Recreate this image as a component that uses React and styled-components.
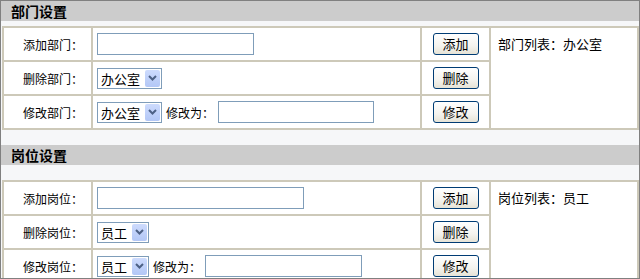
import React from "react"
import styled, { createGlobalStyle } from "styled-components"

const GlobalStyle = createGlobalStyle`
  html, body {
    margin: 0;
    padding: 0;
    background: #fff;
  }
  body {
    font-family: "Noto Sans CJK SC", "Liberation Sans", sans-serif;
    font-size: 12px;
    color: #000;
  }
`

const sections = [
  {
    title: "部门设置",
    noun: "部门",
    options: "办公室",
    list: "部门列表：办公室",
    gap: 5,
    addWidth: 157,
    selectWidth: 65,
    editWidth: 156,
  },
  {
    title: "岗位设置",
    noun: "岗位",
    options: "员工",
    list: "岗位列表：员工",
    gap: 15,
    addWidth: 207,
    selectWidth: 52,
    editWidth: 157,
  },
]

const Chevron = () => (
  <svg width="9" height="6" viewBox="0 0 9 6">
    <path d="M1 1 L4.5 4.5 L8 1" stroke="#4d6185" strokeWidth="2" fill="none" />
  </svg>
)

const Section = ({ s, first }) => (
  <>
    <Header first={first}>{s.title}</Header>
    <Grid top={s.gap}>
      <LabelCell>添加{s.noun}：</LabelCell>
      <FieldCell>
        <TextInput w={s.addWidth} />
      </FieldCell>
      <ButtonCell>
        <Button>添加</Button>
      </ButtonCell>

      <LabelCell>删除{s.noun}：</LabelCell>
      <FieldCell>
        <Select w={s.selectWidth}>
          <span>{s.options}</span>
          <Arrow>
            <Chevron />
          </Arrow>
        </Select>
      </FieldCell>
      <ButtonCell>
        <Button>删除</Button>
      </ButtonCell>

      <LabelCell>修改{s.noun}：</LabelCell>
      <FieldCell>
        <Select w={s.selectWidth}>
          <span>{s.options}</span>
          <Arrow>
            <Chevron />
          </Arrow>
        </Select>
        <span>修改为：</span>
        <TextInput w={s.editWidth} />
      </FieldCell>
      <ButtonCell>
        <Button>修改</Button>
      </ButtonCell>

      <ListCell>{s.list}</ListCell>
    </Grid>
  </>
)

const App = () => (
  <>
    <GlobalStyle />
    <Frame>
      {sections.map((s, i) => (
        <Section key={s.title} s={s} first={i === 0} />
      ))}
    </Frame>
  </>
)

const Frame = styled.div`
  width: 640px;
  height: 279px;
  box-sizing: border-box;
  border: 1px solid #808080;
  background: #f6f7f9;
  overflow: hidden;
`

const Header = styled.div`
  height: 20px;
  margin-top: ${({ first }) => (first ? 0 : 15)}px;
  padding-left: 10px;
  background: #cccccc;
  font-size: 14px;
  font-weight: bold;
  line-height: 20px;
`

const Grid = styled.div`
  display: grid;
  grid-template-columns: 89px 329px 69px 148px;
  grid-template-rows: repeat(3, 34px);
  width: 635px;
  margin: ${({ top }) => top}px 0 0 1px;
  border: 1px solid #cdc9b9;
  background: #fff;
`

const Cell = styled.div`
  box-sizing: border-box;
  border: 1px solid #cdc9b9;
  display: flex;
  align-items: center;
`

const LabelCell = styled(Cell)`
  justify-content: flex-end;
  padding-right: 8px;
`

const FieldCell = styled(Cell)`
  gap: 4px;
  padding-left: 4px;
`

const ButtonCell = styled(Cell)`
  justify-content: center;
`

const ListCell = styled(Cell)`
  grid-column: 4;
  grid-row: 1 / span 3;
  align-items: flex-start;
  padding: 6px 7px;
  font-size: 13px;
`

const TextInput = styled.input`
  box-sizing: border-box;
  width: ${({ w }) => w}px;
  height: 22px;
  margin: 0;
  padding: 0 2px;
  border: 1px solid #7f9db9;
  background: #fff;
  font: 12px "Noto Sans CJK SC", sans-serif;
`

const Select = styled.div`
  box-sizing: border-box;
  width: ${({ w }) => w}px;
  height: 21px;
  display: flex;
  align-items: center;
  justify-content: space-between;
  padding-left: 3px;
  border: 1px solid #7f9db9;
  background: #fff;
  font-size: 13px;
`

const Arrow = styled.span`
  align-self: stretch;
  width: 15px;
  margin: 1px;
  display: flex;
  align-items: center;
  justify-content: center;
  border-radius: 2px;
  background: linear-gradient(#cddbfd, #b3c7f6);
`

const Button = styled.button`
  box-sizing: border-box;
  width: 46px;
  height: 22px;
  margin: 0;
  padding: 0;
  border: 1px solid #003c74;
  border-radius: 3px;
  background: linear-gradient(#ffffff, #f4f3ee 60%, #e6e3d6);
  color: #000;
  font: 13px "Noto Sans CJK SC", sans-serif;
  line-height: 20px;
`

export default App
